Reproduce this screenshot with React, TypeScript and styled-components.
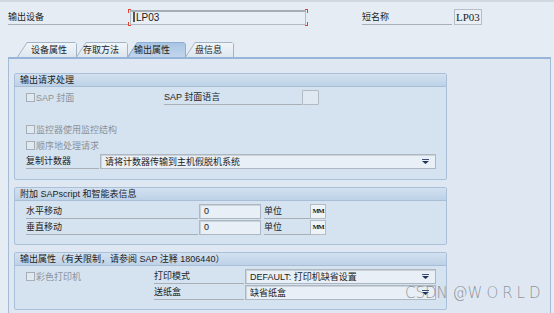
import React from 'react';
import styled, {createGlobalStyle} from 'styled-components';

const GlobalStyle = createGlobalStyle`
    html, body {
        margin: 0;
        padding: 0;
    }

    body {
        background: #e5ecf3;
        font-family: "Liberation Sans", "Noto Sans CJK SC", sans-serif;
        font-size: 9px;
        color: #1d1d1d;
        overflow: hidden;
    }
`

const Arrow = () => (
    <svg width="7" height="5" viewBox="0 0 7 5">
        <rect x="0" y="0" width="7" height="1" fill="#3b4f6e"/>
        <path d="M0 2 H7 L3.5 5 Z" fill="#1f3458"/>
    </svg>
)

export default function App() {
    return (
        <>
            <GlobalStyle/>
            <Page>
                <HeaderRow>
                    <FieldLabel $w={120}>输出设备</FieldLabel>
                    <DeviceInput>
                        <Caret/>LP03
                    </DeviceInput>
                    <FieldLabel $w={90} style={{marginLeft: 56}}>短名称</FieldLabel>
                    <ShortBox>LP03</ShortBox>
                </HeaderRow>

                <TabRow>
                    <Tab $w={60} $pad={14}><span>设备属性</span></Tab>
                    <Tab $w={52} $pad={7}><span>存取方法</span></Tab>
                    <Tab $w={59} $pad={7} $active><span>输出属性</span></Tab>
                    <Tab $w={49} $pad={10}><span>盘信息</span></Tab>
                </TabRow>

                <Panel>
                    <Group>
                        <GroupHeader>输出请求处理</GroupHeader>
                        <GroupBody $bottom={10}>
                            <Row>
                                <Check $w={138}><Box/>SAP 封面</Check>
                                <FieldLabel $w={138}>SAP 封面语言</FieldLabel>
                                <TinyBox/>
                            </Row>
                            <Row/>
                            <Row><Check $w={200}><Box/>监控器使用监控结构</Check></Row>
                            <Row><Check $w={200}><Box/>顺序地处理请求</Check></Row>
                            <Row>
                                <FieldLabel $w={73}>复制计数器</FieldLabel>
                                <Select $w={336}>请将计数器传输到主机假脱机系统<Arrow/></Select>
                            </Row>
                        </GroupBody>
                    </Group>

                    <Group>
                        <GroupHeader>附加 SAPscript 和智能表信息</GroupHeader>
                        <GroupBody $bottom={9}>
                            <Row>
                                <FieldLabel $w={172}>水平移动</FieldLabel>
                                <Input $w={62}>0</Input>
                                <FieldLabel $w={46} style={{marginLeft: 3}}>单位</FieldLabel>
                                <UnitBox>MM</UnitBox>
                            </Row>
                            <Row>
                                <FieldLabel $w={172}>垂直移动</FieldLabel>
                                <Input $w={62}>0</Input>
                                <FieldLabel $w={46} style={{marginLeft: 3}}>单位</FieldLabel>
                                <UnitBox>MM</UnitBox>
                            </Row>
                        </GroupBody>
                    </Group>

                    <Group>
                        <GroupHeader>输出属性（有关限制，请参阅 SAP 注释 1806440）</GroupHeader>
                        <GroupBody $bottom={9}>
                            <Row>
                                <Check $w={128}><Box/>彩色打印机</Check>
                                <FieldLabel $w={90}>打印模式</FieldLabel>
                                <Select $w={191}>DEFAULT: 打印机缺省设置<Arrow/></Select>
                            </Row>
                            <Row>
                                <Check $w={128}/>
                                <FieldLabel $w={90}>送纸盒</FieldLabel>
                                <Select $w={191}>缺省纸盒<Arrow/></Select>
                            </Row>
                        </GroupBody>
                    </Group>
                </Panel>

                <Watermark>CSDN @<Spaced>WORLD</Spaced></Watermark>
            </Page>
        </>
    );
}

const Page = styled.div`
    position: relative;
    width: 554px;
    height: 313px;
    box-sizing: border-box;
    border-top: 2px solid #cfd7df;
    overflow: hidden;
`

const HeaderRow = styled.div`
    display: flex;
    align-items: flex-end;
    height: 16px;
    padding: 7px 0 0 8px;
`

const FieldLabel = styled.div<{$w: number}>`
    flex: none;
    width: ${p => p.$w}px;
    height: 15px;
    line-height: 14px;
    box-sizing: border-box;
    border-bottom: 1px solid #a8afb7;
    white-space: nowrap;
`

const red = 'linear-gradient(#e5402c, #e5402c)';

const DeviceInput = styled.div`
    position: relative;
    width: 176px;
    height: 15px;
    margin-left: 2px;
    box-sizing: border-box;
    background: #e8eef5;
    border: 1px solid #b3bcc5;
    border-top: 2px solid #a5aeb7;
    line-height: 12px;
    padding-left: 2px;
    font-size: 10px;
    color: #222;

    &::before {
        content: "";
        position: absolute;
        top: -3px;
        bottom: -2px;
        left: -3px;
        right: -3px;
        background:
            ${red} left top / 3px 1px no-repeat,
            ${red} left top / 1px 4px no-repeat,
            ${red} left bottom / 3px 1px no-repeat,
            ${red} left bottom / 1px 4px no-repeat,
            ${red} right top / 3px 1px no-repeat,
            ${red} right top / 1px 4px no-repeat,
            ${red} right bottom / 3px 1px no-repeat,
            ${red} right bottom / 1px 4px no-repeat;
    }
`

const Caret = styled.span`
    display: inline-block;
    width: 2px;
    height: 10px;
    margin-right: 1px;
    vertical-align: -1px;
    background: #555;
`

const ShortBox = styled.div`
    width: 28px;
    height: 16px;
    margin-left: 2px;
    box-sizing: border-box;
    border: 1px solid #b6bec7;
    background: #e9eff5;
    font-family: "Liberation Serif", serif;
    font-size: 11px;
    line-height: 14px;
    padding-left: 1px;
`

const TabRow = styled.div`
    display: flex;
    height: 15px;
    margin: 17px 0 0 17px;
`

const Tab = styled.div<{$w: number; $pad: number; $active?: boolean}>`
    position: relative;
    flex: none;
    width: ${p => p.$w}px;
    height: 15px;
    margin-right: -1px;
    padding-left: ${p => p.$pad}px;
    box-sizing: border-box;
    line-height: 16px;
    background: ${p => p.$active ? '#8eaed3' : '#a3b4c7'};
    clip-path: polygon(0 100%, 10px 0, calc(100% - 2px) 0, 100% 2px, 100% 100%);
    z-index: ${p => p.$active ? 2 : 1};

    &::before {
        content: "";
        position: absolute;
        top: 1px;
        left: 1px;
        right: 1px;
        bottom: ${p => p.$active ? '-1px' : '0'};
        background: ${p => p.$active
            ? 'linear-gradient(#a9c5e4, #c3d7ec)'
            : 'linear-gradient(#f1f5f9, #dde6ef)'};
        clip-path: polygon(0 100%, 9.3px 0, 100% 0, 100% 100%);
    }

    span {
        position: relative;
    }
`

const Panel = styled.div`
    width: 543px;
    height: 260px;
    margin-left: 8px;
    box-sizing: border-box;
    background: #dfe8f2;
    border: 1px solid #a6bcd5;
    border-top: 2px solid #97b5d9;
    padding: 14px 0 0 5px;
`

const Group = styled.div`
    width: 433px;
    box-sizing: border-box;
    border: 1px solid #aac0d8;
    border-radius: 2px;
    background: #d5e3f1;
    margin-bottom: 7px;
    overflow: hidden;
`

const GroupHeader = styled.div`
    height: 12px;
    line-height: 12px;
    padding-left: 5px;
    background: linear-gradient(#d3e1f0, #bdd1e7);
    border-bottom: 1px solid #a8bed7;
    white-space: nowrap;
`

const GroupBody = styled.div<{$bottom: number}>`
    display: flex;
    flex-direction: column;
    padding: 2px 0 ${p => p.$bottom}px 11px;
`

const Row = styled.div`
    display: flex;
    align-items: center;
    height: 16px;
`

const Check = styled.div<{$w: number}>`
    flex: none;
    display: flex;
    align-items: center;
    width: ${p => p.$w}px;
    color: #8b929a;
    white-space: nowrap;
`

const Box = styled.span`
    width: 9px;
    height: 9px;
    margin-right: 1px;
    box-sizing: border-box;
    border: 1px solid #a6afb9;
    background: #e0e8f0;
`

const Field = styled.div<{$w: number}>`
    flex: none;
    position: relative;
    display: flex;
    align-items: center;
    width: ${p => p.$w}px;
    height: 15px;
    box-sizing: border-box;
    background: #e8eff6;
    border: 1px solid #aeb7c1;
    box-shadow: inset 1px 1px 0 #cad2da;
    padding-left: 4px;
    white-space: nowrap;
`

const Input = styled(Field)`
    margin-left: 1px;
`

const Select = styled(Field)`
    margin-left: 1px;

    svg {
        position: absolute;
        right: 6px;
        top: 4px;
    }
`

const TinyBox = styled.div`
    width: 17px;
    height: 15px;
    box-sizing: border-box;
    border: 1px solid #b1bac3;
    background: #e0e9f2;
    border-radius: 1px;
`

const UnitBox = styled.div`
    width: 16px;
    height: 15px;
    box-sizing: border-box;
    border: 1px solid #b4bcc5;
    background: #eef3f8;
    font-family: "Liberation Serif", serif;
    font-weight: bold;
    font-size: 7px;
    line-height: 13px;
    text-align: center;
    letter-spacing: -1px;
    overflow: hidden;
`

const Watermark = styled.div`
    position: absolute;
    left: 405px;
    top: 282px;
    font-family: "DejaVu Sans", sans-serif;
    font-weight: 200;
    font-size: 15px;
    color: rgba(120, 124, 130, 0.8);
    white-space: nowrap;
`

const Spaced = styled.span`
    letter-spacing: 4px;
`
